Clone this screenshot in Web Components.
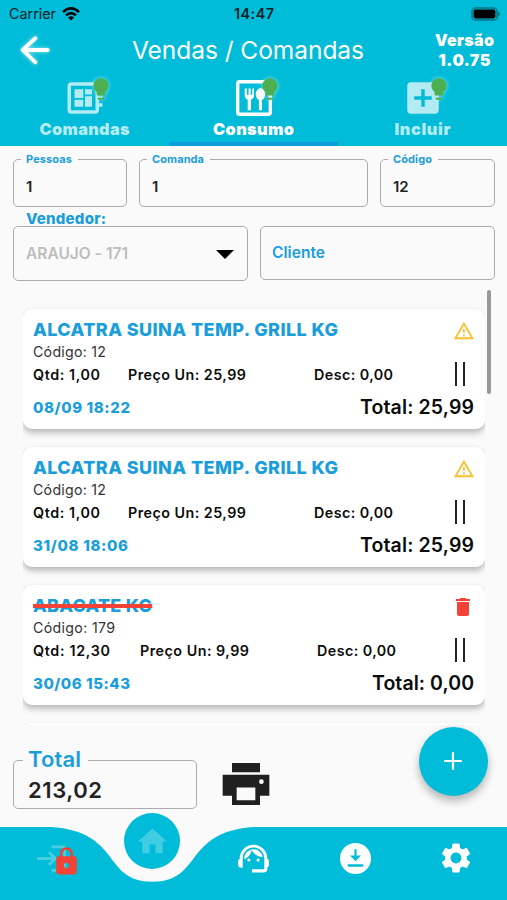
<!DOCTYPE html>
<html lang="pt-BR">
<head>
<meta charset="utf-8">
<title>Vendas / Comandas</title>
<style>
  body {
    margin: 0;
    background: #fafafa;
    font-family: Inter, "Liberation Sans", sans-serif;
  }
</style>
</head>
<body>
<sales-app></sales-app>

<script>
class BaseElement extends HTMLElement {
  constructor() {
    super();
    this.shadowObj = this.attachShadow({ mode: "open" });
  }

  connectedCallback() {
    this.render();
  }

  attr(name) {
    return this.getAttribute(name) || "";
  }

  render() {
    this.shadowObj.innerHTML = `<style>${this.getStyles()}</style>${this.getTemplate()}`;
  }
}

const ICONS = {
  back: `<path d="M20.4 8.2 7.7 20l12.7 12.3M8.2 20h24.5" fill="none" stroke="currentColor" stroke-width="3.8" stroke-linecap="round" stroke-linejoin="round"/>`,
  wifi: `<path d="M1 5.2Q9-2.4 17 5.2M4 8.4q5-4.6 10 0" fill="none" stroke="currentColor" stroke-width="2.5"/><path d="M6 10.6q3-2.5 6 0l-3 3z"/>`,
  battery: `<rect x="1" y="1" width="25" height="12" rx="3.6" fill="none" stroke="currentColor" stroke-width="1.5" opacity=".4"/><rect x="2.6" y="2.6" width="21.8" height="8.8" rx="1.8"/><path d="M27.3 4.6c2 .8 2 4 0 4.8z" opacity=".45"/>`,
  board: `<path d="M22 9V7h-2V5c0-1.1-.9-2-2-2H4c-1.1 0-2 .9-2 2v14c0 1.1.9 2 2 2h14c1.1 0 2-.9 2-2v-2h2v-2h-2v-2h2v-2h-2V9h2zm-4 10H4V5h14v14zM6 13h5v4H6zm6-6h4v3h-4zM6 7h5v5H6zm6 4h4v6h-4z"/>`,
  meal: `<rect x="2.7" y="2.7" width="18.6" height="18.6" rx="1" fill="none" stroke="currentColor" stroke-width="1.9"/><path d="M6.7 6.5v4c0 1.2.7 2 1.7 2.3V19h1.9v-6.2c1-.3 1.7-1.1 1.7-2.3v-4h-1v3.7h-.9V6.5H8.9v3.7H8V6.5z"/><path d="M15.7 6.4c-1.5 0-2.7 1.5-2.7 3.5 0 1.5.7 2.7 1.8 3.2V19h1.8v-5.9c1.1-.5 1.8-1.7 1.8-3.2 0-2-1.2-3.5-2.7-3.5z"/>`,
  addBox: `<path d="M19 3H5c-1.11 0-2 .9-2 2v14c0 1.1.89 2 2 2h14c1.1 0 2-.9 2-2V5c0-1.1-.9-2-2-2zm-2 10h-4v4h-2v-4H7v-2h4V7h2v4h4v2z"/>`,
  bulb: `<path d="M9 21c0 .5.4 1 1 1h4c.6 0 1-.5 1-1v-1H9v1zm3-19C8.1 2 5 5.1 5 9c0 2.4 1.2 4.500 3 5.700V17c0 .5.4 1 1 1h6c.6 0 1-.5 1-1v-2.300c1.800-1.300 3-3.400 3-5.700 0-3.900-3.100-7-7-7z"/>`,
  warning: `<path d="M12 5.99 19.53 19H4.47L12 5.99M12 2 1 21h22L12 2zm1 14h-2v2h2v-2zm0-6h-2v4h2v-4z"/>`,
  trash: `<path d="M6 19c0 1.1.9 2 2 2h8c1.1 0 2-.9 2-2V7H6v12zM19 4h-3.500l-1-1h-5l-1 1H5v2h14V4z"/>`,
  print: `<path d="M22 8H2v9h4v4h12v-4h4V8zm-6 11H8v-5.500h8V19zM18 3H6v4h12V3z"/><circle cx="18.600" cy="11" r="1" fill="#fff"/>`,
  login: `<path d="M11 7 9.6 8.4l2.6 2.6H2v2h10.2l-2.6 2.6L11 17l5-5-5-5zm9 12h-8v2h8c1.1 0 2-.9 2-2V5c0-1.1-.9-2-2-2h-8v2h8v14z"/>`,
  lock: `<path d="M18 8h-1V6c0-2.76-2.24-5-5-5S7 3.24 7 6v2H6c-1.1 0-2 .9-2 2v10c0 1.1.9 2 2 2h12c1.1 0 2-.9 2-2V10c0-1.1-.9-2-2-2zm-6 9c-1.1 0-2-.9-2-2s.9-2 2-2 2 .9 2 2-.9 2-2 2zm3.1-9H8.9V6c0-1.71 1.39-3.1 3.1-3.1s3.1 1.39 3.1 3.1v2z"/>`,
  home: `<path d="M10 20v-6h4v6h5v-8h3L12 3 2 12h3v8z"/>`,
  agent: `<path d="M21 12.22C21 6.73 16.74 3 12 3c-4.69 0-9 3.65-9 9.28-.6.34-1 .98-1 1.72v2c0 1.1.9 2 2 2h1v-6.1c0-3.87 3.13-7 7-7s7 3.13 7 7V19h-8v2h8c1.1 0 2-.9 2-2v-1.22c.59-.31 1-.92 1-1.64v-2.3c0-.7-.41-1.31-1-1.62z"/><circle cx="9" cy="13" r="1"/><circle cx="15" cy="13" r="1"/><path d="M18 11.03A6.04 6.04 0 0 0 12.05 6c-3.03 0-6.29 2.51-6.03 6.45a8.075 8.075 0 0 0 4.86-5.89c1.31 2.63 4 4.44 7.12 4.47z"/>`,
  download: `<circle cx="12" cy="12" r="10"/><path d="M11.3 6h1.4v4h2.8L12 13.8 8.5 10h2.800zM7 15.700h10v1.600H7z" fill="#00bcd8"/>`,
  gear: `<path d="M19.14 12.94c.04-.3.06-.61.06-.94 0-.32-.02-.64-.07-.94l2.03-1.58c.18-.14.23-.41.12-.61l-1.92-3.32c-.12-.22-.37-.29-.59-.22l-2.39.96c-.5-.38-1.03-.7-1.62-.94l-.36-2.54c-.04-.24-.24-.41-.48-.41h-3.84c-.24 0-.43.17-.47.41l-.36 2.54c-.59.24-1.13.57-1.62.94l-2.39-.96c-.22-.08-.47 0-.59.22L2.74 8.87c-.12.21-.08.47.12.61l2.03 1.58c-.05.3-.09.63-.09.94s.02.64.07.94l-2.03 1.58c-.18.14-.23.41-.12.61l1.92 3.32c.12.22.37.29.59.22l2.39-.96c.5.38 1.03.7 1.62.94l.36 2.54c.05.24.24.41.48.41h3.84c.24 0 .44-.17.47-.41l.36-2.54c.59-.24 1.13-.56 1.62-.94l2.39.96c.22.08.47 0 .59-.22l1.92-3.32c.12-.22.07-.47-.12-.61l-2.01-1.58zM12 15.6c-1.98 0-3.6-1.62-3.6-3.6s1.62-3.6 3.6-3.6 3.6 1.62 3.6 3.6-1.62 3.6-3.6 3.6z"/>`,
  plus: `<path d="M12 3.2v17.6M3.2 12h17.6" stroke="currentColor" stroke-width="2.2"/>`,
  caret: `<path d="M0 0h18L9 9z"/>`,
};

// <app-icon name size [height] [box]>
class AppIcon extends BaseElement {
  getStyles() {
    const w = this.attr("size");
    const h = this.attr("height") || w;
    return `
      :host { display: block; flex: none; width: ${w}px; height: ${h}px; }
      svg { display: block; overflow: visible; }
    `;
  }

  getTemplate() {
    const w = this.attr("size");
    const h = this.attr("height") || w;
    const box = this.attr("box") || "0 0 24 24";
    return `<svg width="${w}" height="${h}" viewBox="${box}" fill="currentColor">${ICONS[this.attr("name")]}</svg>`;
  }
}

// Spaces its letters so the line comes out exactly `width` pixels long.
class TrackedText extends BaseElement {
  getStyles() {
    return `
      :host { display: inline-block; white-space: pre; }
    `;
  }

  getTemplate() {
    return `<slot></slot>`;
  }

  connectedCallback() {
    super.connectedCallback();
    const gaps = this.textContent.length - 1;
    const natural = this.getBoundingClientRect().width;
    const spacing = (Number(this.attr("width")) - natural) / gaps;
    this.style.letterSpacing = `${spacing}px`;
    this.style.marginRight = `${-spacing}px`;
  }
}

class StatusBar extends BaseElement {
  getStyles() {
    return `
      :host {
        display: grid;
        grid-template-columns: 1fr auto 1fr;
        align-items: center;
        height: 27px;
        padding: 0 6px 0 9px;
        color: #052127;
        font-size: 14.3px;
        line-height: 27px;
      }
      .carrier { display: flex; align-items: center; gap: 6px; }
      .time { margin-left: -2px; font-weight: 600; }
      .battery { justify-self: end; }
      app-icon { color: #000; }
    `;
  }

  getTemplate() {
    return `
      <div class="carrier">
        <tracked-text width="47">Carrier</tracked-text>
        <app-icon name="wifi" size="18" height="14" box="0 0 18 14"></app-icon>
      </div>
      <div class="time"><tracked-text width="40">14:47</tracked-text></div>
      <app-icon class="battery" name="battery" size="30" height="14" box="0 0 30 14"></app-icon>
    `;
  }
}

class TitleBar extends BaseElement {
  getStyles() {
    return `
      :host {
        display: grid;
        grid-template-columns: 117px 1fr 128px;
        align-items: center;
        height: 46px;
        padding: 0 13px 0 15px;
        box-sizing: border-box;
        color: #fff;
      }
      app-icon { filter: drop-shadow(0 0 2px #fff9); }
      .title { font-size: 24.5px; line-height: 46px; }
      .version {
        justify-self: end;
        text-align: center;
        font-size: 16px;
        font-weight: 900;
        line-height: 20px;
      }
    `;
  }

  getTemplate() {
    return `
      <app-icon name="back" size="40" box="0 0 40 40"></app-icon>
      <div class="title"><tracked-text width="232">Vendas / Comandas</tracked-text></div>
      <div class="version">
        <div><tracked-text width="59">Versão</tracked-text></div>
        <div><tracked-text width="52">1.0.75</tracked-text></div>
      </div>
    `;
  }
}

class NavTab extends BaseElement {
  getStyles() {
    return `
      :host {
        flex: 1;
        display: flex;
        flex-direction: column;
        align-items: center;
        height: 73px;
        box-sizing: border-box;
        padding-top: 4px;
        border-bottom: 4px solid transparent;
        color: #b2ebf2;
        font-size: 16.3px;
        font-weight: 900;
      }
      :host([active]) { color: #fff; border-color: #0d9fdc; }
      .icon { position: relative; height: 42px; }
      .bulb {
        position: absolute;
        top: -1px;
        left: 24px;
        color: #4caf50;
        filter: drop-shadow(0 0 2px #b2ebf2cc);
      }
      .label { line-height: 20px; }
    `;
  }

  getTemplate() {
    return `
      <div class="icon">
        <app-icon name="${this.attr("icon")}" size="42"></app-icon>
        <app-icon class="bulb" name="bulb" size="26"></app-icon>
      </div>
      <div class="label"><tracked-text width="${this.attr("label-width")}">${this.attr("label")}</tracked-text></div>
    `;
  }
}

class AppHeader extends BaseElement {
  getStyles() {
    return `
      :host { display: block; height: 146px; background: #00bcd8; }
      nav { display: flex; }
    `;
  }

  getTemplate() {
    return `
      <status-bar></status-bar>
      <title-bar></title-bar>
      <nav>
        <nav-tab icon="board" label="Comandas" label-width="90"></nav-tab>
        <nav-tab icon="meal" label="Consumo" label-width="81" active></nav-tab>
        <nav-tab icon="addBox" label="Incluir" label-width="56"></nav-tab>
      </nav>
    `;
  }
}

// Outlined input whose label cuts into the top border
class OutlinedField extends BaseElement {
  getStyles() {
    return `
      :host {
        display: block;
        min-width: 0;
        color: #222;
        font-size: 15px;
        font-weight: 600;
      }
      fieldset {
        box-sizing: border-box;
        height: 100%;
        min-width: 0;
        margin: 0;
        padding: 0 12px;
        border: 1.5px solid #acacac;
        border-radius: 5px;
      }
      legend {
        height: 12px;
        margin-left: -5px;
        padding: 0 6px 0 5px;
        color: #1a9edb;
        font-size: 11px;
        font-weight: 700;
        line-height: 13px;
      }
      .value { line-height: 43px; }
      :host([large]) { font-size: 22px; }
      :host([large]) legend { height: 26px; margin-left: -3px; padding: 0 7px 0 5px; font-size: 22px; font-weight: 600; line-height: 24px; }
      :host([large]) .value { padding-left: 2px; line-height: 35px; }
    `;
  }

  getTemplate() {
    return `
      <fieldset>
        <legend><tracked-text width="${this.attr("label-width")}">${this.attr("label")}</tracked-text></legend>
        <div class="value"><slot></slot></div>
      </fieldset>
    `;
  }
}

class OrderForm extends BaseElement {
  getStyles() {
    return `
      :host { display: block; padding: 7px 12px 0 13px; color: #1a9edb; }
      .fields { display: grid; grid-template-columns: 114px 229px 115px; gap: 12px; }
      outlined-field { height: 54px; }
      .caption {
        height: 19px;
        padding-left: 13px;
        font-size: 15px;
        font-weight: 800;
        line-height: 24px;
      }
      .boxes { display: grid; grid-template-columns: 235px 235px; gap: 12px; }
      .box {
        display: flex;
        align-items: center;
        justify-content: space-between;
        height: 54px;
        box-sizing: border-box;
        padding: 0 13px 2px 11px;
        border: 1.5px solid #acacac;
        border-radius: 5px;
        font-size: 15.5px;
        font-weight: 600;
      }
      .seller { height: 55px; padding: 0 13px 0 12px; color: #bdbdbd; }
      .seller app-icon { margin-top: 1px; color: #000; }
    `;
  }

  getTemplate() {
    return `
      <div class="fields">
        <outlined-field label="Pessoas" label-width="46">1</outlined-field>
        <outlined-field label="Comanda" label-width="52">1</outlined-field>
        <outlined-field label="Código" label-width="39">12</outlined-field>
      </div>
      <div class="caption"><tracked-text width="80">Vendedor:</tracked-text></div>
      <div class="boxes">
        <div class="box seller">
          <tracked-text width="102">ARAUJO - 171</tracked-text>
          <app-icon name="caret" size="18" height="9" box="0 0 18 9"></app-icon>
        </div>
        <div class="box"><tracked-text width="53">Cliente</tracked-text></div>
      </div>
    `;
  }
}

class OrderItem extends BaseElement {
  getStyles() {
    return `
      :host {
        display: block;
        box-sizing: border-box;
        height: 120px;
        padding: 9px 11px 0 10px;
        border-radius: 9px;
        background: #fff;
        box-shadow: 0 4px 6px #0000003d, 0 1px 5px #0000000d;
        color: #0c0c0c;
      }
      .row { display: flex; justify-content: space-between; }
      .head { height: 23px; }
      .name { color: #1a9edb; font-size: 18px; font-weight: 800; line-height: 23px; }
      .name tracked-text { height: 23px; }
      :host([cancelled]) .name tracked-text {
        text-decoration: line-through #f44336 4px;
      }
      .status { margin-top: 1px; color: #fbc02d; }
      :host([cancelled]) .status { color: #f44336; }
      .code { color: #333; font-size: 14.2px; line-height: 21px; }
      .numbers { display: flex; height: 26px; font-size: 14.3px; font-weight: 600; line-height: 26px; }
      .numbers .price { margin-left: var(--price-gap); }
      .numbers .discount { margin-left: 68px; }
      .handle {
        width: 6px;
        height: 24px;
        margin: 0 9px 0 auto;
        border: solid #222;
        border-width: 0 2px;
      }
      .foot { align-items: center; height: 38px; }
      .date { color: #1a9edb; font-size: 15px; font-weight: 800; }
      .total { font-size: 19.5px; font-weight: 600; }
    `;
  }

  // Attribute holds "text|width"
  text(name) {
    const [text, width] = this.attr(name).split("|");
    return `<tracked-text width="${width}">${text}</tracked-text>`;
  }

  getTemplate() {
    const icon = this.hasAttribute("cancelled")
      ? `<app-icon class="status" name="trash" size="24" box="-1 0 24 24"></app-icon>`
      : `<app-icon class="status" name="warning" size="22" box="-1 -1 24 24"></app-icon>`;
    return `
      <div class="row head">
        <div class="name">${this.text("name")}</div>
        ${icon}
      </div>
      <div class="code">${this.text("code")}</div>
      <div class="numbers">
        <div>${this.text("amount")}</div>
        <div class="price">${this.text("price")}</div>
        <div class="discount">${this.text("discount")}</div>
        <div class="handle"></div>
      </div>
      <div class="row foot">
        <div class="date">${this.text("date")}</div>
        <div class="total">${this.text("total")}</div>
      </div>
    `;
  }
}

class OrderList extends BaseElement {
  getStyles() {
    return `
      :host { display: flex; box-sizing: border-box; height: 453px; padding: 23px 16px 0 23px; }
      .items {
        flex: 1;
        display: flex;
        flex-direction: column;
        gap: 18px;
        height: 435px;
        box-sizing: border-box;
        padding-top: 19px;
        overflow: hidden;
      }
      .items > * { flex: none; }
      .next { height: 20px; margin: 0 5px; background: #fff; box-shadow: 0 0 2px #0001; }
      .scrollbar { width: 4px; height: 104px; margin-left: 2px; border-radius: 2px; background: #999; }
    `;
  }

  getTemplate() {
    return `
      <div class="items">
        <order-item style="--price-gap: 28px" name="ALCATRA SUINA TEMP. GRILL KG|305" code="Código: 12|73"
          amount="Qtd: 1,00|67" price="Preço Un: 25,99|118" discount="Desc: 0,00|79"
          date="08/09 18:22|97" total="Total: 25,99|114"></order-item>
        <order-item style="--price-gap: 28px" name="ALCATRA SUINA TEMP. GRILL KG|305" code="Código: 12|73"
          amount="Qtd: 1,00|67" price="Preço Un: 25,99|118" discount="Desc: 0,00|79"
          date="31/08 18:06|95" total="Total: 25,99|114"></order-item>
        <order-item cancelled style="--price-gap: 30px" name="ABACATE KG|119" code="Código: 179|82"
          amount="Qtd: 12,30|77" price="Preço Un: 9,99|109" discount="Desc: 0,00|79"
          date="30/06 15:43|97" total="Total: 0,00|102"></order-item>
        <div class="next"></div>
      </div>
      <div class="scrollbar"></div>
    `;
  }
}

class TotalBar extends BaseElement {
  getStyles() {
    return `
      :host { display: flex; align-items: flex-start; height: 100px; padding: 0 19px 0 13px; }
      outlined-field { width: 184px; height: 62px; margin-top: 20px; }
      .print { margin: 29px 0 0 21px; color: #202020; }
      button {
        display: grid;
        place-items: center;
        width: 69px;
        height: 69px;
        margin: 0 0 0 auto;
        padding: 0 2px 2px 0;
        border: 0;
        border-radius: 50%;
        background: #00bcd8;
        color: #fff;
        box-shadow: 0 6px 9px #0003, 0 2px 10px #0000001a;
      }
    `;
  }

  getTemplate() {
    return `
      <outlined-field large label="Total" label-width="53"><tracked-text width="74">213,02</tracked-text></outlined-field>
      <app-icon class="print" name="print" size="56"></app-icon>
      <button><app-icon name="plus" size="24"></app-icon></button>
    `;
  }
}

class BottomNav extends BaseElement {
  getStyles() {
    return `
      :host { position: relative; display: block; height: 73px; color: #fff; }
      .wave { position: absolute; inset: 0; }
      nav {
        position: relative;
        display: grid;
        grid-template-columns: repeat(5, 1fr);
        justify-items: center;
        align-items: center;
        height: 62px;
      }
      .exit { position: relative; margin-left: 2px; }
      .exit > :first-child { opacity: .28; }
      .lock { position: absolute; top: 5px; left: 17px; color: #f44336; }
      .home {
        display: grid;
        place-items: center;
        width: 56px;
        height: 56px;
        margin-top: -34px;
        border-radius: 50%;
        background: #00bcd8;
        color: #40cce2;
      }
      .agent, .download { margin-left: 1px; }
    `;
  }

  getTemplate() {
    return `
      <svg class="wave" width="507" height="73">
        <path fill="#00bcd8" d="M0 0H51C122 4.5 102 54.7 152.5 54.7S183 4.5 254 0H507V73H0Z"/>
      </svg>
      <nav>
        <div class="exit">
          <app-icon name="login" size="35"></app-icon>
          <app-icon class="lock" name="lock" size="31"></app-icon>
        </div>
        <div class="home"><app-icon name="home" size="35"></app-icon></div>
        <app-icon class="agent" name="agent" size="37"></app-icon>
        <app-icon class="download" name="download" size="31" box="2 2 20 20"></app-icon>
        <app-icon name="gear" size="36"></app-icon>
      </nav>
    `;
  }
}

class SalesApp extends BaseElement {
  getStyles() {
    return `
      :host { display: flex; flex-direction: column; width: 507px; height: 900px; overflow: hidden; background: #fafafa; }
      order-form { height: 121px; box-sizing: content-box; margin-bottom: -7px; }
      order-list { height: 460px; }
    `;
  }

  getTemplate() {
    return `
      <app-header></app-header>
      <order-form></order-form>
      <order-list></order-list>
      <total-bar></total-bar>
      <bottom-nav></bottom-nav>
    `;
  }
}

customElements.define("sales-app", SalesApp);
customElements.define("app-header", AppHeader);
customElements.define("status-bar", StatusBar);
customElements.define("title-bar", TitleBar);
customElements.define("nav-tab", NavTab);
customElements.define("order-form", OrderForm);
customElements.define("outlined-field", OutlinedField);
customElements.define("order-list", OrderList);
customElements.define("order-item", OrderItem);
customElements.define("total-bar", TotalBar);
customElements.define("bottom-nav", BottomNav);
customElements.define("app-icon", AppIcon);
// Last, because it measures text that the others have already styled
customElements.define("tracked-text", TrackedText);
</script>
</body>
</html>
